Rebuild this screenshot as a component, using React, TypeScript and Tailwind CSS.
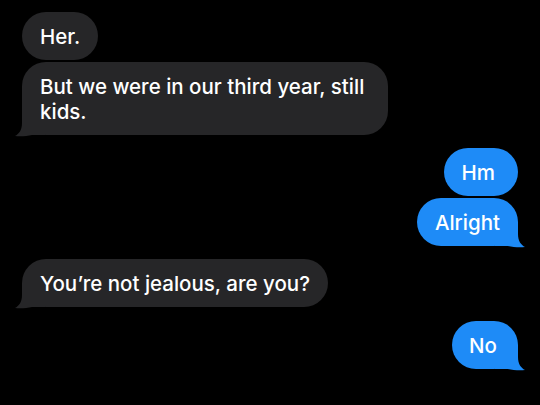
import React from 'react';

type Side = 'in' | 'out';

interface BubbleProps {
  side: Side;
  text: string;
  tail?: boolean;
  className?: string;
}

function Tail({ side }: { side: Side }) {
  const fill = side === 'in' ? '#262628' : '#1e8bf7';
  return (
    <svg
      width="30"
      height="26"
      viewBox="0 0 30 26"
      className={
        side === 'in'
          ? 'absolute left-[-7px] bottom-[-2px]'
          : 'absolute right-[-7px] bottom-[-2px] scale-x-[-1]'
      }
    >
      <path d="M7 0 L30 0 L30 24 L17 24 C12 25 6 25.6 0 25 C4 23 7 19 7 12 Z" fill={fill} />
    </svg>
  );
}

function Bubble({ side, text, tail, className = '' }: BubbleProps) {
  const base =
    side === 'in'
      ? 'self-start bg-[#262628]'
      : 'self-end bg-[#1e8bf7]';
  return (
    <div
      className={`relative ${base} rounded-[24px] px-[18px] py-[11.5px] text-[20.5px] font-medium leading-[25px] text-white ${className}`}
    >
      {tail && <Tail side={side} />}
      <span className="relative">{text}</span>
    </div>
  );
}

export default function App() {
  return (
    <div
      className="w-[540px] h-[405px] overflow-hidden bg-black flex flex-col px-[22px] pt-[12px]"
      style={{ fontFamily: 'Inter, "Noto Sans", sans-serif' }}
    >
      <Bubble side="in" text="Her." />
      <Bubble
        side="in"
        tail
        className="mt-[2px] w-[366px]"
        text="But we were in our third year, still kids."
      />
      <Bubble side="out" text="Hm" className="mt-[13px] pr-[23px]" />
      <Bubble side="out" tail text="Alright" className="mt-[2px]" />
      <Bubble side="in" tail text="You’re not jealous, are you?" className="mt-[13px]" />
      <Bubble side="out" tail text="No" className="mt-[14px] pr-[21px] pl-[17px]" />
      <div className="mt-[12px] ml-[58px] h-[1px] w-[16px] bg-[#1c1c1c]" />
      <p className="mt-[22px] pl-[18px] text-[13px] leading-[16px] tracking-[2px] text-[#9a9a9e]">
        TEXT MESSAGE · TODAY 11:42 PM
      </p>
    </div>
  );
}
